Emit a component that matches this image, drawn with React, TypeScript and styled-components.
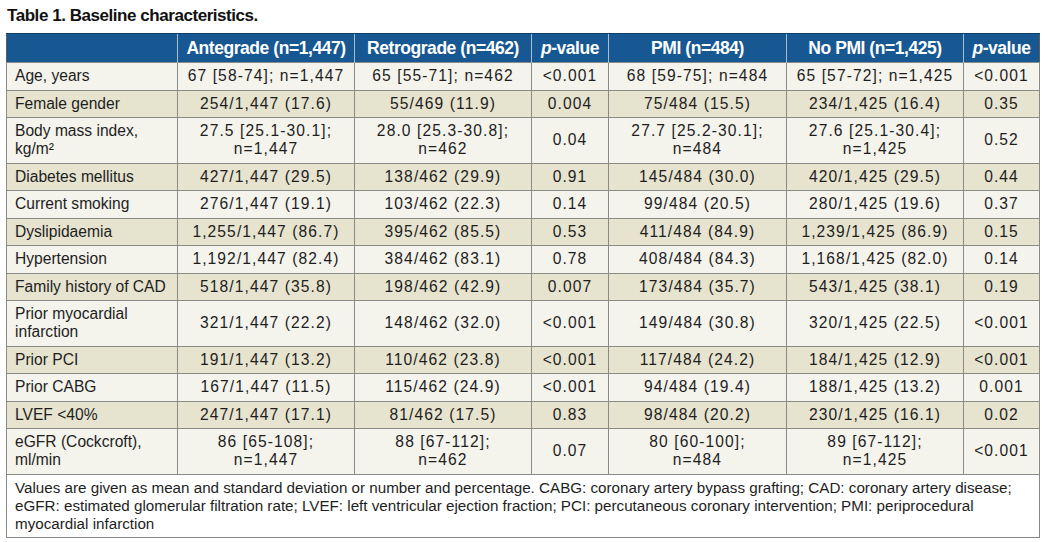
import React from 'react'
import styled, { createGlobalStyle } from 'styled-components'

const GlobalStyle = createGlobalStyle`
  html, body {
    margin: 0;
    padding: 0;
    background: #ffffff;
  }
`

const Page = styled.div`
  padding: 5px 6px 0 6px;
  width: 1033px;
  font-family: 'Liberation Sans', Arial, sans-serif;
  color: #1e1e1e;
`

const Title = styled.h1`
  margin: 0 0 6px 1px;
  font-family: 'Liberation Sans', Arial, sans-serif;
  font-weight: bold;
  font-size: 17px;
  letter-spacing: -0.45px;
  line-height: 22px;
  color: #111111;
`

const Table = styled.table`
  width: 1033px;
  border-collapse: collapse;
  table-layout: fixed;
  border: 1px solid #5c5c5c;
`

const HeadCell = styled.th`
  background: #175893;
  color: #ffffff;
  font-family: 'Liberation Sans', Arial, sans-serif;
  font-weight: bold;
  font-size: 17.5px;
  letter-spacing: -0.45px;
  line-height: 20px;
  padding: 4px 2px;
  text-align: center;
  white-space: nowrap;
  border-left: 1px solid #a9bdd0;
  border-top: 1px solid #0f3d66;

  &:first-child {
    border-left: none;
  }

  i {
    font-style: italic;
  }
`

const Row = styled.tr<{ $shade: boolean }>`
  background: ${(p) => (p.$shade ? '#e6e3cf' : '#f4f3ec')};
`

const Cell = styled.td<{ $label?: boolean }>`
  font-size: 15.6px;
  line-height: 18px;
  letter-spacing: ${(p) => (p.$label ? '0' : '1.1px')};
  padding: 4px ${(p) => (p.$label ? '8px' : '2px')} 4.5px;
  text-align: ${(p) => (p.$label ? 'left' : 'center')};
  white-space: nowrap;
  vertical-align: middle;
  border: 1px solid #8a8a86;
`

const NoteCell = styled.td`
  background: #ffffff;
  font-size: 15.2px;
  line-height: 18px;
  padding: 4px 8px 4px 8px;
  border: 1px solid #8a8a86;
`

type Data = [string, string, string, string, string, string, string]

const rows: Data[] = [
  ['Age, years', '67 [58-74]; n=1,447', '65 [55-71]; n=462', '<0.001', '68 [59-75]; n=484', '65 [57-72]; n=1,425', '<0.001'],
  ['Female gender', '254/1,447 (17.6)', '55/469 (11.9)', '0.004', '75/484 (15.5)', '234/1,425 (16.4)', '0.35'],
  [
    'Body mass index,\nkg/m²',
    '27.5 [25.1-30.1];\nn=1,447',
    '28.0 [25.3-30.8];\nn=462',
    '0.04',
    '27.7 [25.2-30.1];\nn=484',
    '27.6 [25.1-30.4];\nn=1,425',
    '0.52',
  ],
  ['Diabetes mellitus', '427/1,447 (29.5)', '138/462 (29.9)', '0.91', '145/484 (30.0)', '420/1,425 (29.5)', '0.44'],
  ['Current smoking', '276/1,447 (19.1)', '103/462 (22.3)', '0.14', '99/484 (20.5)', '280/1,425 (19.6)', '0.37'],
  ['Dyslipidaemia', '1,255/1,447 (86.7)', '395/462 (85.5)', '0.53', '411/484 (84.9)', '1,239/1,425 (86.9)', '0.15'],
  ['Hypertension', '1,192/1,447 (82.4)', '384/462 (83.1)', '0.78', '408/484 (84.3)', '1,168/1,425 (82.0)', '0.14'],
  ['Family history of CAD', '518/1,447 (35.8)', '198/462 (42.9)', '0.007', '173/484 (35.7)', '543/1,425 (38.1)', '0.19'],
  ['Prior myocardial\ninfarction', '321/1,447 (22.2)', '148/462 (32.0)', '<0.001', '149/484 (30.8)', '320/1,425 (22.5)', '<0.001'],
  ['Prior PCI', '191/1,447 (13.2)', '110/462 (23.8)', '<0.001', '117/484 (24.2)', '184/1,425 (12.9)', '<0.001'],
  ['Prior CABG', '167/1,447 (11.5)', '115/462 (24.9)', '<0.001', '94/484 (19.4)', '188/1,425 (13.2)', '0.001'],
  ['LVEF <40%', '247/1,447 (17.1)', '81/462 (17.5)', '0.83', '98/484 (20.2)', '230/1,425 (16.1)', '0.02'],
  [
    'eGFR (Cockcroft),\nml/min',
    '86 [65-108];\nn=1,447',
    '88 [67-112];\nn=462',
    '0.07',
    '80 [60-100];\nn=484',
    '89 [67-112];\nn=1,425',
    '<0.001',
  ],
]

const widths = [171, 177, 177, 77, 178, 177, 76]

const Lines = ({ text }: { text: string }) => (
  <>
    {text.split('\n').map((line, i) => (
      <React.Fragment key={i}>
        {i > 0 && <br />}
        {line}
      </React.Fragment>
    ))}
  </>
)

const PValue = () => (
  <>
    <i>p</i>-value
  </>
)

const App = () => (
  <>
    <GlobalStyle />
    <Page>
      <Title>Table 1. Baseline characteristics.</Title>
      <Table>
        <colgroup>
          {widths.map((w, i) => (
            <col key={i} style={{ width: w }} />
          ))}
        </colgroup>
        <thead>
          <tr>
            <HeadCell />
            <HeadCell>Antegrade (n=1,447)</HeadCell>
            <HeadCell>Retrograde (n=462)</HeadCell>
            <HeadCell>
              <PValue />
            </HeadCell>
            <HeadCell>PMI (n=484)</HeadCell>
            <HeadCell>No PMI (n=1,425)</HeadCell>
            <HeadCell>
              <PValue />
            </HeadCell>
          </tr>
        </thead>
        <tbody>
          {rows.map((r, i) => (
            <Row key={r[0]} $shade={i % 2 === 1}>
              {r.map((c, j) => (
                <Cell key={j} $label={j === 0}>
                  <Lines text={c} />
                </Cell>
              ))}
            </Row>
          ))}
          <tr>
            <NoteCell colSpan={7}>
              Values are given as mean and standard deviation or number and percentage. CABG: coronary artery bypass
              grafting; CAD: coronary artery disease; eGFR: estimated glomerular filtration rate; LVEF: left ventricular
              ejection fraction; PCI: percutaneous coronary intervention; PMI: periprocedural myocardial infarction
            </NoteCell>
          </tr>
        </tbody>
      </Table>
    </Page>
  </>
)

export default App
